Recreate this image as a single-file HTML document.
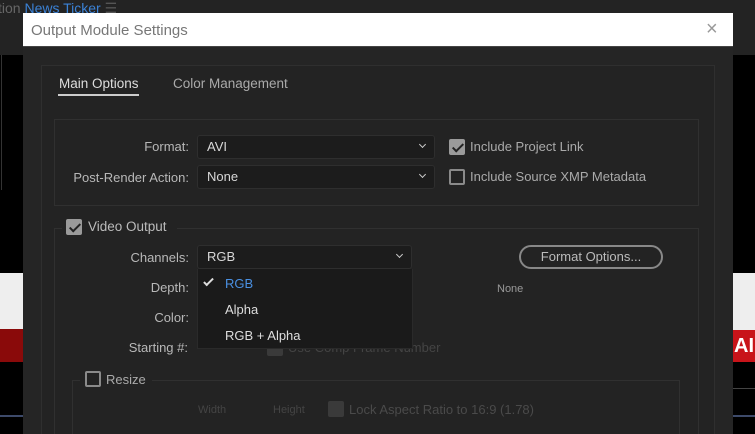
<!DOCTYPE html>
<html><head><style>
*{margin:0;padding:0;box-sizing:border-box}
html,body{width:755px;height:434px;overflow:hidden}
body{background:#232323;font-family:"Liberation Sans",sans-serif;position:relative;color:#b8b8b8;font-size:13px}
.a{position:absolute}
.t{position:absolute;white-space:nowrap}
.dd{position:absolute;background:#1c1c1c;border:1px solid #2e2e2e;border-radius:3px;color:#d8d8d8;padding-left:9px;line-height:22px;font-size:13px}
.chev{position:absolute;right:9px;top:6px;width:5px;height:5px;border-right:1.5px solid #ccc;border-bottom:1.5px solid #ccc;transform:rotate(45deg)}
.cb{position:absolute;width:16px;height:16px;border:2px solid #8a8a8a;border-radius:2px}
.cb.on{background:#9a9a9a;border-color:#9a9a9a}
.cb.on:after{content:"";position:absolute;left:4px;top:0px;width:4px;height:9px;border-right:2.5px solid #222;border-bottom:2.5px solid #222;transform:rotate(45deg)}
.lbl{text-align:right;width:140px}
</style></head><body>
<div class="t" style="left:-2px;top:0;color:#666;font-size:14px">tion <span style="color:#3b82d6">News Ticker</span> <span style="color:#555">☰</span></div>
<div class="a" style="left:0;top:55px;width:23px;height:379px;background:#000"></div>
<div class="a" style="left:1px;top:55px;width:1px;height:135px;background:#333"></div>
<div class="a" style="left:0;top:273px;width:23px;height:56px;background:#eee"></div>
<div class="a" style="left:0;top:329px;width:23px;height:33px;background:#8a0a0a"></div>
<div class="a" style="left:0;top:415px;width:23px;height:2px;background:#3d4a6a"></div>
<div class="a" style="left:733px;top:55px;width:22px;height:379px;background:#000"></div>
<div class="a" style="left:733px;top:273px;width:22px;height:57px;background:#eee"></div>
<div class="a" style="left:733px;top:330px;width:22px;height:32px;background:#c8141a;color:#fff;font-weight:bold;font-size:20px;line-height:32px;padding-left:1px;overflow:hidden">AI</div>
<div class="a" style="left:733px;top:388px;width:22px;height:1px;background:#444"></div>
<div class="a" style="left:733px;top:415px;width:22px;height:2px;background:#3d4a6a"></div>
<div class="t" style="left:683px;top:418px;color:#888;font-size:11px">wtvid.com</div>

<div class="a" style="left:23px;top:13px;width:710px;height:421px;background:#252525"></div>
<div class="a" style="left:23px;top:13px;width:710px;height:34px;background:#fff;border-bottom:1px solid #444"></div>
<div class="t" style="left:31px;top:22px;color:#777;font-size:15px">Output Module Settings</div>
<div class="t" style="left:706px;top:18px;color:#999;font-size:20px;font-weight:200">×</div>

<div class="a" style="left:41px;top:65px;width:674px;height:369px;border:1px solid #2f2f2f;border-bottom:none;background:#232323"></div>
<div class="t" style="left:59px;top:76px;color:#ddd;font-size:13.5px">Main Options</div>
<div class="a" style="left:58px;top:94px;width:81px;height:2px;background:#ccc"></div>
<div class="t" style="left:173px;top:76px;color:#aaa;font-size:13.5px">Color Management</div>

<div class="a" style="left:54px;top:119px;width:645px;height:87px;border:1px solid #303030"></div>
<div class="t lbl" style="left:49px;top:139px">Format:</div>
<div class="dd" style="left:197px;top:135px;width:238px;height:24px">AVI<div class="chev"></div></div>
<div class="t lbl" style="left:49px;top:170px">Post-Render Action:</div>
<div class="dd" style="left:197px;top:165px;width:238px;height:24px">None<div class="chev"></div></div>
<div class="cb on" style="left:449px;top:139px"></div>
<div class="t" style="left:470px;top:139px;color:#aaa;font-size:13px">Include Project Link</div>
<div class="cb" style="left:449px;top:169px"></div>
<div class="t" style="left:470px;top:169px;color:#aaa;font-size:13px">Include Source XMP Metadata</div>

<div class="a" style="left:54px;top:228px;width:645px;height:206px;border:1px solid #303030;border-bottom:none"></div>
<div class="a" style="left:62px;top:220px;width:115px;height:16px;background:#232323"></div>
<div class="cb on" style="left:66px;top:219px"></div>
<div class="t" style="left:88px;top:219px;color:#bbb;font-size:13.5px">Video Output</div>
<div class="t lbl" style="left:49px;top:250px">Channels:</div>
<div class="dd" style="left:197px;top:245px;width:215px;height:24px">RGB<div class="chev"></div></div>
<div class="t lbl" style="left:49px;top:280px">Depth:</div>
<div class="t lbl" style="left:49px;top:310px">Color:</div>
<div class="t lbl" style="left:48px;top:340px">Starting #:</div>
<div class="t" style="left:288px;top:340px;color:#444;font-size:13px">Use Comp Frame Number</div>
<div class="a" style="left:267px;top:340px;width:16px;height:16px;background:#3a3a3a;border-radius:2px"></div>
<div class="a" style="left:519px;top:245px;width:144px;height:24px;border:2px solid #888;border-radius:12px;color:#bbb;text-align:center;line-height:20px;font-size:13px">Format Options...</div>
<div class="t" style="left:497px;top:283px;color:#999;font-size:11px">None</div>

<div class="a" style="left:72px;top:380px;width:608px;height:54px;border:1px solid #303030;border-bottom:none"></div>
<div class="a" style="left:80px;top:372px;width:72px;height:16px;background:#232323"></div>
<div class="cb" style="left:85px;top:371px"></div>
<div class="t" style="left:106px;top:372px;color:#aaa;font-size:13px">Resize</div>
<div class="t" style="left:198px;top:404px;color:#444;font-size:11px">Width</div>
<div class="t" style="left:273px;top:404px;color:#444;font-size:11px">Height</div>
<div class="a" style="left:328px;top:401px;width:16px;height:16px;background:#3a3a3a;border-radius:2px"></div>
<div class="t" style="left:349px;top:402px;color:#4a4a4a;font-size:13px">Lock Aspect Ratio to 16:9 (1.78)</div>

<div class="a" style="left:197px;top:269px;width:216px;height:80px;background:#1a1a1a;border:1px solid #2a2a2a;border-top:none"></div>
<div class="a" style="left:206px;top:276px;width:5px;height:10px;border-right:2px solid #ddd;border-bottom:2px solid #ddd;transform:rotate(45deg)"></div>
<div class="t" style="left:225px;top:276px;color:#4a90e2;font-size:13px">RGB</div>
<div class="t" style="left:225px;top:302px;color:#ddd;font-size:13px">Alpha</div>
<div class="t" style="left:225px;top:328px;color:#ddd;font-size:13px">RGB + Alpha</div>
</body></html>
